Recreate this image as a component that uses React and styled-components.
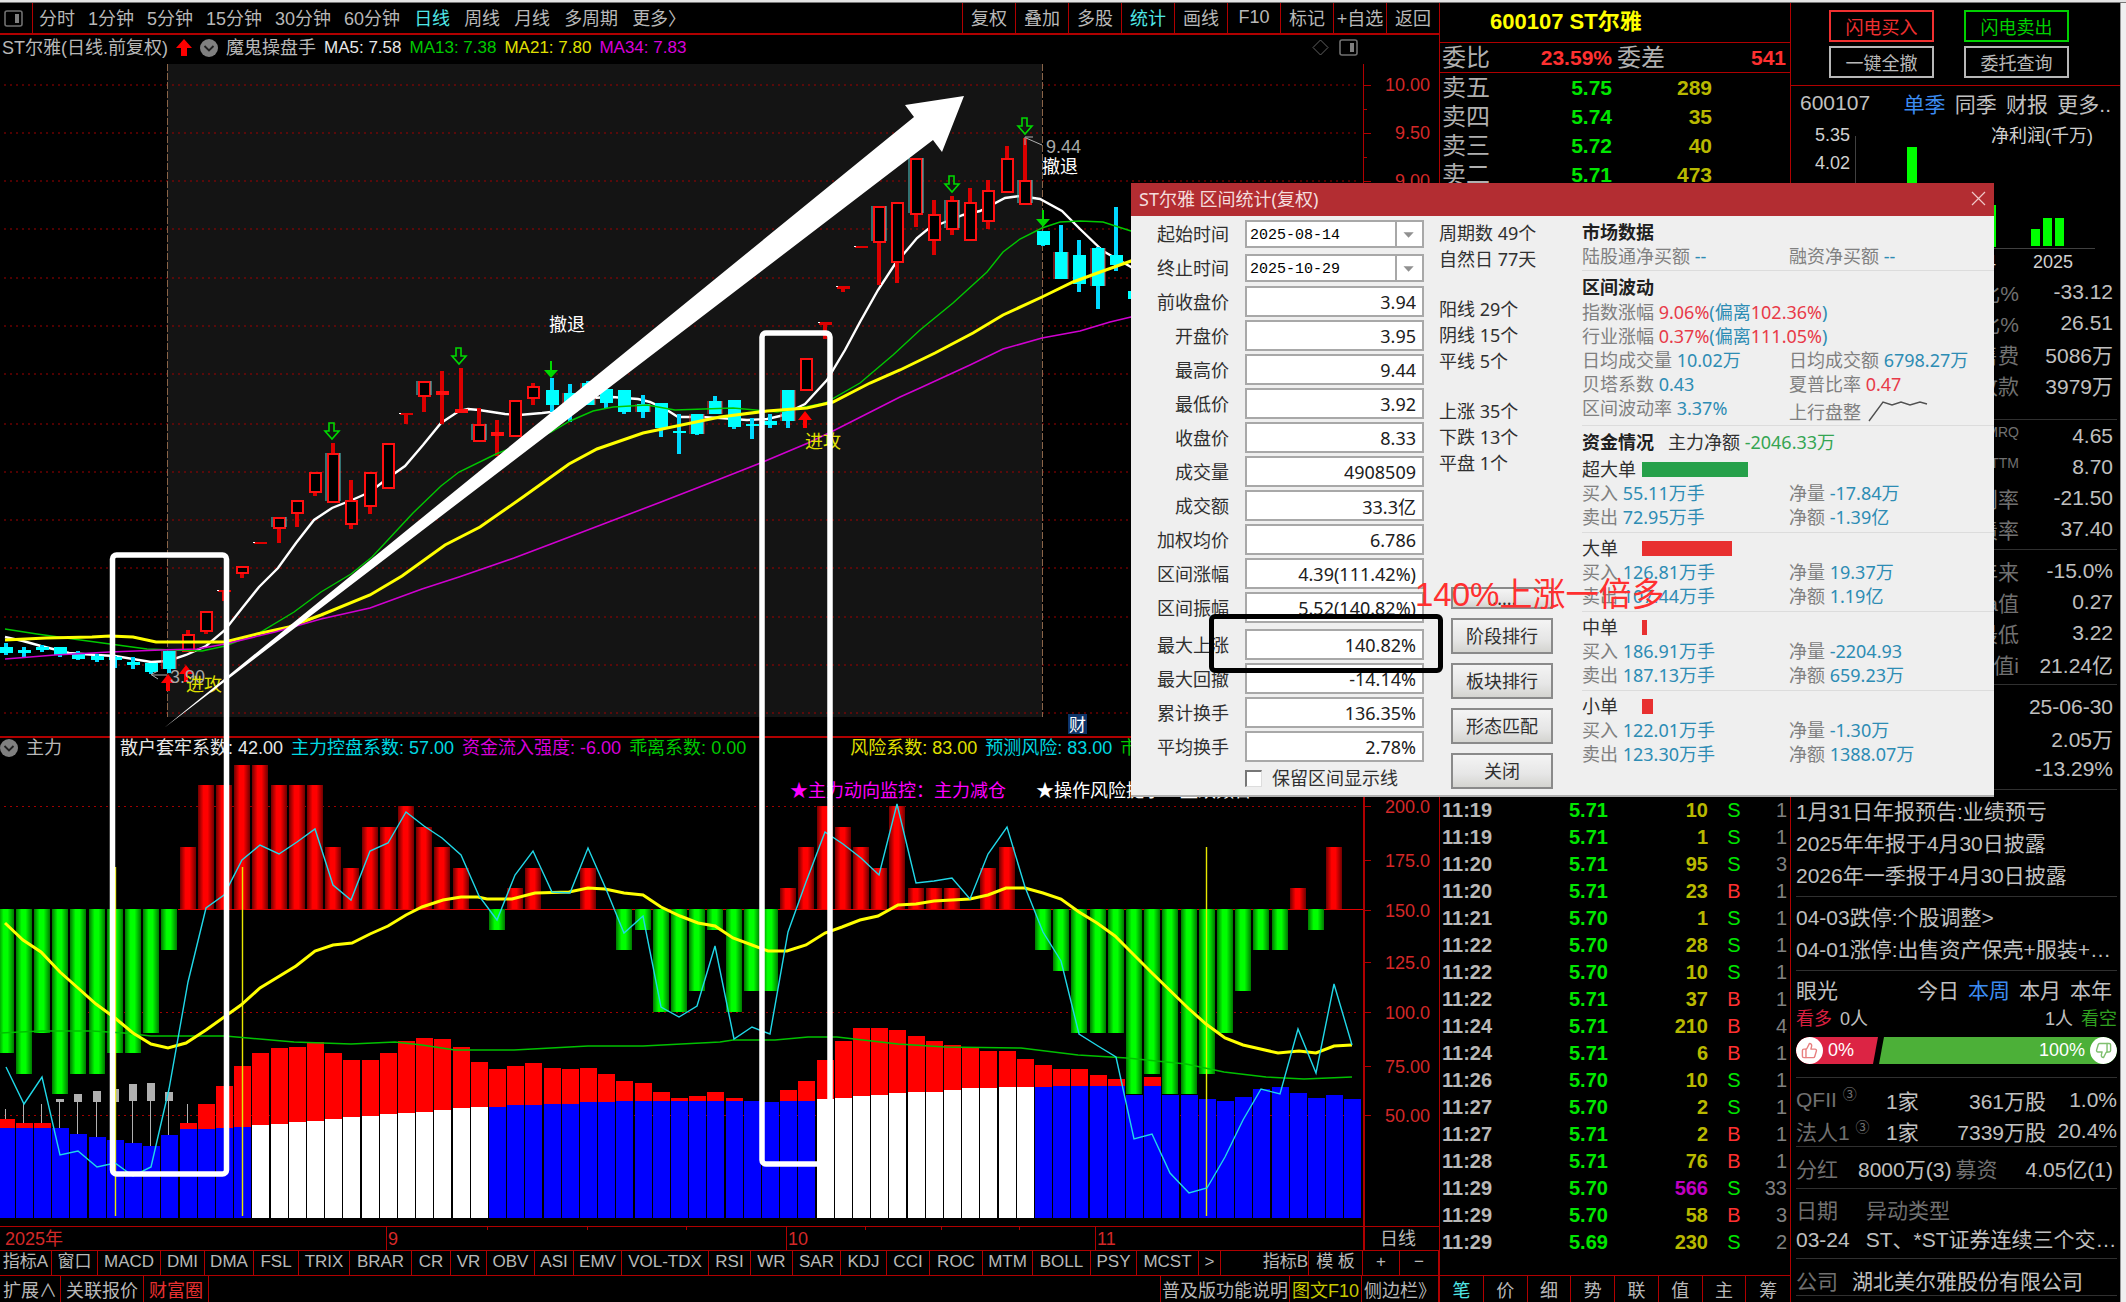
import React from "react";
import styled, { createGlobalStyle } from "styled-components";
import { ThumbsUp, ThumbsDown } from "lucide-react";

const RED = "#b00000";
const SANS = '"Liberation Sans", "Noto Sans CJK SC", sans-serif';
const UI = '"Noto Sans", "Noto Sans CJK SC", sans-serif';

const Global = createGlobalStyle`
  * { box-sizing: border-box; }
  body { margin: 0; background: #000; font-family: ${SANS}; color: #c0c0c0; font-size: 18px; }
  button { font-family: inherit; font-size: inherit; color: inherit; background: none; border: 0; padding: 0; margin: 0; cursor: pointer; white-space: nowrap; }
  a { text-decoration: none; color: inherit; }
  svg { display: block; }
`;

/* ---------- page ---------- */
const Page = styled.div`
  position: relative;
  min-height: 100vh;
  display: flex;
  flex-direction: column;
  border-top: 2px solid #e4e4e4;
`;
const Columns = styled.div`
  flex: 1;
  display: flex;
  border-top: 1px solid #777;
`;
const Left = styled.main`
  position: relative;
  flex: 1;
  min-width: 0;
  display: flex;
  flex-direction: column;
`;
const Orders = styled.section`
  width: 352px;
  display: flex;
  flex-direction: column;
  border-left: 1px solid ${RED};
  border-right: 1px solid ${RED};
`;
const Info = styled.aside`
  width: 329px;
  display: flex;
  flex-direction: column;
`;
const Edge = styled.div`
  width: 6px;
  background: #f0f0f0;
  border-left: 1px solid #999;
`;

/* ---------- toolbars ---------- */
const Toolbar = styled.nav`
  height: 32px;
  display: flex;
  align-items: center;
  border-bottom: 2px solid ${RED};
`;
const PanelToggle = styled.button`
  width: 33px;
  height: 30px;
  padding-left: 4px;
  margin-right: 6px;
  border-right: 1px solid ${RED};
`;
const TabGroup = styled.div`
  display: flex;
  gap: ${(p) => p.$gap}px;
  margin-right: 14px;
  padding-bottom: 2px;
`;
const Tab = styled.button`
  color: ${(p) => (p.$on ? "#4fe6e6" : "#b8b8b8")};
`;
const ToolCells = styled.div`
  margin-left: auto;
  display: flex;
  height: 30px;
`;
const ToolCell = styled(Tab)`
  width: 53px;
  padding-bottom: 2px;
  border-left: 1px solid ${RED};
`;
const Legend = styled.div`
  height: ${(p) => p.$h}px;
  display: flex;
  align-items: center;
  gap: 8px;
  white-space: nowrap;
  padding: 0 8px 4px ${(p) => p.$pad}px;
  border-top: ${(p) => (p.$line ? `2px solid ${RED}` : "0")};
  overflow: hidden;
`;
const LegendItem = styled.span`
  color: ${(p) => p.$c || "#b8b8b8"};
  font-size: ${(p) => p.$s || 18}px;
  margin-left: ${(p) => p.$ml || 0}px;
  line-height: 24px;
`;
const LegendTools = styled.div`
  margin-left: auto;
  margin-right: 73px;
  display: flex;
  gap: 10px;
`;
const IndicatorBar = styled.nav`
  height: 26px;
  display: grid;
  grid-template-columns:
    52px 46px 63px 44px 49px 45px 51px 62px 39px 36px 48px 39px 48px 87px 42px 42px 48px 46px 43px 53px 50px 58px 46px 62px 22px
    1fr 54px 37px 39px;
  border-top: 1px solid ${RED};
  border-bottom: 1px solid ${RED};
  font-size: 17px;
  color: #b8b8b8;
`;
const IndicatorCell = styled.button`
  border-right: 1px solid ${RED};
  padding-bottom: 2px;
  line-height: 22px;
  text-align: ${(p) => (p.$end ? "right" : "center")};
`;
const FootBar = styled.nav`
  height: 26px;
  display: flex;
`;
const FootCell = styled.button`
  padding: 0 ${(p) => p.$px || 5}px;
  color: ${(p) => p.$c || "#b8b8b8"};
  border-right: 1px solid ${RED};
`;
const FootRight = styled.div`
  margin-left: auto;
  display: flex;
  border-left: 1px solid ${RED};
`;

/* ---------- charts ---------- */
const ChartSvg = styled.svg`
  width: 100%;
  height: ${(p) => p.$h}px;
  font-family: ${SANS};
  font-size: 18px;
`;
const Marks = styled.svg`
  position: absolute;
  left: 0;
  top: 0;
  width: 100%;
  height: 100%;
  pointer-events: none;
`;

const X = (i) => Math.round(5.5 + 18.2 * i);

// index, body top, body bottom, high, low, kind (r hollow red, c filled cyan), edge tint
const candles = [
  [0, 647, 653, 643, 655, "c"], [1, 650, 653, 647, 658, "c"], [2, 647, 650, 645, 652, "c"],
  [3, 647, 655, 647, 657, "c"], [4, 653, 659, 651, 660, "c"], [5, 656, 660, 654, 662, "c"],
  [6, 657, 660, 656, 668, "c"], [7, 662, 665, 657, 669, "c"], [8, 663, 672, 663, 674, "c"],
  [9, 651, 669, 651, 673, "c", 1], [10, 634, 650, 630, 650, "r"], [11, 611, 630, 611, 634, "r"],
  [12, 590, 591, 590, 601, "t"], [13, 566, 572, 566, 578, "r"], [14, 542, 543, 542, 543, "t"],
  [15, 517, 527, 517, 543, "r", 1], [16, 500, 512, 500, 527, "r"], [17, 472, 491, 472, 496, "r"],
  [18, 453, 501, 443, 501, "r", 1], [19, 500, 523, 480, 529, "r"], [20, 472, 505, 472, 514, "r"],
  [21, 443, 487, 443, 487, "r"], [22, 413, 414, 413, 424, "t"], [23, 381, 395, 381, 412, "r", 1],
  [24, 391, 393, 371, 424, "r"], [25, 409, 411, 368, 412, "r"], [26, 424, 440, 408, 440, "r", 1],
  [27, 432, 434, 420, 456, "r"], [28, 400, 435, 400, 437, "r"], [29, 386, 397, 383, 405, "r"],
  [30, 390, 405, 378, 412, "c"], [31, 393, 412, 384, 422, "c", 1], [32, 383, 405, 381, 405, "c", 1],
  [33, 389, 403, 389, 408, "c"], [34, 390, 412, 390, 414, "c"], [35, 404, 412, 395, 418, "c", 1],
  [36, 403, 428, 403, 437, "c"], [37, 431, 433, 414, 454, "c"], [38, 414, 434, 414, 435, "c", 1],
  [39, 401, 414, 396, 414, "c", 1], [40, 400, 427, 400, 429, "c"], [41, 424, 426, 418, 439, "c"],
  [42, 421, 425, 414, 428, "c"], [43, 390, 421, 390, 428, "c", 1], [44, 358, 389, 358, 389, "r"],
  [45, 322, 324, 322, 339, "t"], [46, 286, 288, 286, 292, "t"], [47, 246, 247, 246, 247, "t"],
  [48, 206, 241, 206, 285, "r", 1], [49, 202, 261, 202, 283, "r"], [50, 158, 213, 158, 227, "r", 1],
  [51, 214, 239, 200, 255, "r"], [52, 200, 228, 196, 235, "r", 1], [53, 202, 239, 188, 239, "r"],
  [54, 190, 220, 180, 229, "r"], [55, 158, 191, 146, 191, "r"], [56, 180, 203, 138, 203, "r", 1],
  [57, 231, 245, 231, 246, "c"], [58, 252, 279, 225, 279, "c", 1], [59, 255, 284, 240, 292, "c"],
  [60, 248, 286, 247, 309, "c", 1], [61, 255, 265, 207, 271, "c"], [62, 291, 299, 291, 302, "c"],
];

const ma5 = "5,637 23,641 41,646 69,653 96,655 115,656 133,659 151,662 168,661 186,655 206,646 225,630 243,607 259,587 278,568 296,543 314,520 332,508 352,500 370,492 388,478 405,466 423,445 441,423 459,411 468,409 479,410 505,414 519,415 542,413 569,410 590,398 612,397 638,399 650,402 667,410 678,417 700,417 720,418 747,420 767,419 780,416 805,404 827,380 845,350 860,322 878,290 895,264 907,250 917,238 928,229 945,222 963,215 980,211 1005,198 1020,196 1040,199 1062,211 1080,229 1103,251 1131,267 1150,280";
const ma13 = "5,629 37,634 73,639 110,644 147,649 202,651 225,646 259,633 294,612 321,592 351,574 372,557 413,513 441,486 459,472 496,454 551,432 570,421 593,411 613,407 647,405 675,410 733,408 777,412 800,408 825,403 860,383 893,355 920,330 953,303 987,272 1003,252 1020,239 1042,228 1060,222 1080,221 1103,222 1131,231 1150,238";
const ma21 = "5,640 46,638 92,637 110,636 133,637 156,642 225,642 257,634 289,627 321,615 370,595 402,576 445,545 480,527 523,497 569,464 597,449 643,433 720,417 767,411 807,408 833,402 870,383 900,370 935,353 973,333 1003,315 1042,297 1073,282 1103,271 1131,261 1150,256";
const ma34 = "5,659 55,655 110,652 161,650 197,649 225,644 275,632 321,619 370,608 422,589 459,577 514,558 551,544 606,523 661,502 720,479 758,464 808,443 833,431 900,397 920,388 970,365 1003,349 1042,338 1080,331 1110,322 1131,317 1150,313";

function Candle({ d }) {
  const [i, top, bot, hi, lo, kind, edge] = d;
  const x = X(i);
  if (kind === "t") {
    return (
      <g fill="#dc0000">
        <rect x={x - 6} y={top} width={13} height={bot - top + 1} />
        <rect x={x - 2} y={top} width={4} height={lo - top} />
        <rect x={x - 7} y={top} width={2} height={1} fill="#fff" />
      </g>
    );
  }
  const isRed = kind === "r";
  const h = Math.max(2, bot - top);
  return (
    <g>
      <rect x={x - 2} y={hi} width={4} height={lo - hi} fill={isRed ? "#dc0000" : "#00d8ff"} />
      {isRed ? (
        <rect x={x - 5} y={top + 1} width={11} height={h} fill="#000" stroke="#ff1010" strokeWidth="2" />
      ) : (
        <rect x={x - 6} y={top} width={13} height={h} fill="#00ffff" />
      )}
      {edge ? (
        <path d={`M${x - 7} ${top}v${h}M${x + 7} ${top}v${h}`} stroke={isRed ? "#50d0d0" : "#e03030"} />
      ) : null}
    </g>
  );
}

const DownHollow = ({ x, y }) => (
  <path d={`M${x - 3} ${y}h5v8h5l-7 8l-7 -8h4z`} fill="none" stroke="#00d800" strokeWidth="1.6" />
);
const DownSolid = ({ x, y }) => <path d={`M${x - 1} ${y}h2v9h6l-7 8l-7 -8h6z`} fill="#00d800" />;
const UpSolid = ({ x, y }) => <path d={`M${x} ${y}l7 9h-5v8h-4v-8h-5z`} fill="#ff0000" />;

const priceGrid = [85, 133, 181, 229, 278, 326, 374, 424, 472, 520, 568, 617, 665, 713];

function PriceChart() {
  return (
    <ChartSvg $h={672} viewBox="0 64 1439 672" preserveAspectRatio="none">
      <rect x="167" y="64" width="875" height="653" fill="#141414" />
      {priceGrid.map((y) => (
        <line key={y} x1="4" x2="1357" y1={y} y2={y} stroke="#a00000" strokeDasharray="2 4" />
      ))}
      <path d="M167.5 64V717M1042.5 64V717" stroke="#8a6448" strokeDasharray="7 2" />
      <polyline points={ma5} fill="none" stroke="#fff" strokeWidth="2.4" />
      {candles.map((d) => <Candle key={d[0]} d={d} />)}
      <polyline points={ma13} fill="none" stroke="#00c800" strokeWidth="1.4" />
      <polyline points={ma21} fill="none" stroke="#ffff00" strokeWidth="3" />
      <polyline points={ma34} fill="none" stroke="#d000d0" strokeWidth="1.6" />
      <DownHollow x={459} y={348} />
      <DownHollow x={332} y={423} />
      <DownHollow x={952} y={176} />
      <DownHollow x={1025} y={118} />
      <DownSolid x={551} y={361} />
      <DownSolid x={1043} y={210} />
      <UpSolid x={168} y={674} />
      <UpSolid x={186} y={665} />
      <UpSolid x={805} y={411} />
      <path d="M167 675H152M158 679L151 674.5L158 671M1042 145L1026 138M1025 145V137L1033 137" fill="none" stroke="#b0b0b0" />
      <text x="170" y="683" fill="#a8a8a8">3.90</text>
      <text x="1046" y="153" fill="#a8a8a8">9.44</text>
      <text x="186" y="691" fill="#e0e000">进攻</text>
      <text x="805" y="448" fill="#e0e000">进攻</text>
      <text x="549" y="331" fill="#fff">撤退</text>
      <text x="1042" y="173" fill="#fff">撤退</text>
      <rect x="1068" y="714" width="19" height="20" fill="#0c3468" />
      <text x="1069" y="731" fill="#fff" fontSize="17">财</text>
      <line x1="1363.5" x2="1363.5" y1="64" y2="736" stroke={RED} />
      {priceGrid.map((y) => (
        <path key={y} d={`M1364 ${y}.5h7M1364 ${y + 24}.5h3`} stroke={RED} />
      ))}
      <g fill="#d42828" textAnchor="end">
        <text x="1430" y="91">10.00</text>
        <text x="1430" y="139">9.50</text>
        <text x="1430" y="187">9.00</text>
      </g>
    </ChartSvg>
  );
}

const force = [
  80, 70, 90, 60, 70, 70, 80, 80, 90, 130, 180, 210, 210, 220, 220, 210, 210, 210, 180, 170, 190, 190, 200, 190, 180,
  170, 150, 140, 160, 170, 150, 150, 170, 150, 130, 140, 100, 100, 110, 140, 100, 110, 110, 160, 180, 200, 190, 180,
  170, 200, 160, 160, 160, 150, 170, 180, 150, 130, 120, 90, 90, 90, 60, 70, 60, 60, 70, 90, 110, 130, 130, 160, 140,
  180, 150,
];
const redTop = [
  1119, 1123, 1123, 0, 0, 0, 0, 0, 0, 0, 1123, 1104, 1086, 1066, 1053, 1048, 1047, 1042, 1053, 1060, 1060, 1053, 1041,
  1038, 1039, 1047, 1062, 1069, 1066, 1063, 1068, 1069, 1068, 1074, 1081, 1083, 1092, 1098, 1096, 1092, 1098, 0, 0,
  1090, 1081, 1060, 1041, 1028, 1028, 1030, 1036, 1041, 1045, 1048, 1051, 1051, 1059, 1065, 1069, 1069, 1075, 1079, 0,
  1077, 0, 0, 0, 0, 0, 0, 0, 0, 0, 0, 0,
];
const baseTop = [
  1128, 1128, 1128, 1128, 1134, 1137, 1140, 1143, 1146, 1135, 1129, 1129, 1128, 1127, 1125, 1124, 1122, 1121, 1119,
  1117, 1116, 1114, 1113, 1112, 1110, 1108, 1107, 1107, 1105, 1105, 1104, 1104, 1102, 1102, 1101, 1101, 1101, 1101,
  1101, 1101, 1101, 1101, 1102, 1101, 1101, 1099, 1098, 1096, 1095, 1093, 1092, 1092, 1090, 1088, 1088, 1087, 1087,
  1087, 1086, 1086, 1086, 1086, 1095, 1086, 1095, 1095, 1099, 1101, 1097, 1089, 1087, 1093, 1098, 1095, 1099,
];
const trend = [
  1067, 1104, 1077, 1155, 1151, 1167, 1163, 1176, 1167, 1089, 982, 908, 895, 860, 845, 854, 842, 829, 885, 900, 851,
  843, 812, 826, 838, 855, 896, 920, 875, 851, 892, 893, 848, 889, 933, 916, 1007, 1017, 1006, 946, 1039, 1027, 1034,
  932, 882, 832, 844, 858, 875, 804, 883, 881, 878, 899, 854, 827, 887, 932, 961, 1034, 1046, 1057, 1139, 1134, 1173,
  1193, 1188, 1157, 1120, 1089, 1094, 1029, 1073, 984, 1045,
];
const sticks = [
  [0, 0, 1109, 1119], [1, 0, 1104, 1123], [2, 0, 1104, 1123], [3, 1099, 1102, 1128], [4, 1094, 1102, 1134],
  [5, 1091, 1102, 1137], [6, 1089, 1102, 1140], [7, 1084, 1101, 1143], [8, 1083, 1101, 1146], [9, 1092, 1101, 1135],
  [10, 0, 1104, 1123],
];
const slowLine = "5,923 23,940 41,952 60,972 78,988 96,1004 115,1018 133,1033 151,1044 168,1048 186,1043 206,1030 241,1005 260,988 296,966 315,951 333,945 352,943 370,934 388,926 406,915 422,907 443,900 461,897 478,897 487,899 512,899 535,893 569,892 588,888 605,889 624,893 643,895 661,907 680,916 698,923 715,926 733,938 752,945 768,951 787,951 806,945 825,933 842,927 860,920 878,916 898,905 916,904 934,901 970,899 988,895 1006,888 1025,888 1043,893 1061,899 1079,912 1097,923 1115,936 1133,954 1152,973 1188,1008 1206,1024 1225,1038 1243,1045 1278,1053 1299,1051 1316,1053 1334,1046 1352,1045";
const marketLine = "0,1033 41,1031 92,1031 124,1033 151,1036 225,1036 248,1038 294,1042 351,1044 395,1042 422,1045 455,1050 514,1050 588,1046 643,1046 720,1042 733,1040 775,1040 808,1037 837,1037 898,1044 945,1047 1021,1048 1078,1055 1127,1058 1186,1064 1224,1072 1266,1077 1304,1079 1352,1077";
const forceAxis = [[806, "200.0"], [860, "175.0"], [910, "150.0"], [962, "125.0"], [1012, "100.0"], [1066, "75.00"], [1115, "50.00"]];
const isWhite = (i) => (i >= 14 && i <= 26) || (i >= 45 && i <= 56);

function ForceChart() {
  return (
    <ChartSvg $h={488} viewBox="0 762 1439 488" preserveAspectRatio="none">
      <defs>
        <linearGradient id="barRed">
          <stop offset="0" stopColor="#700000" />
          <stop offset=".35" stopColor="#ff0000" />
          <stop offset=".6" stopColor="#ff0000" />
          <stop offset="1" stopColor="#700000" />
        </linearGradient>
        <linearGradient id="barGreen">
          <stop offset="0" stopColor="#007800" />
          <stop offset=".35" stopColor="#00ff00" />
          <stop offset=".6" stopColor="#00ff00" />
          <stop offset="1" stopColor="#007800" />
        </linearGradient>
      </defs>
      {[806, 1012, 1115].map((y) => (
        <line key={y} x1="4" x2="1357" y1={y + 0.5} y2={y + 0.5} stroke="#a00000" strokeDasharray="2 4" />
      ))}
      <line x1="178" x2="1363" y1="909.5" y2="909.5" stroke="#e00000" />
      {redTop.map((y, i) => (y ? <rect key={i} x={X(i) - 8} y={y} width="17" height={1218 - y} fill="#ff0000" /> : null))}
      {force.map((v, i) => {
        const y = Math.round(909 - (v - 150) * 2.06);
        if (v > 150) return <rect key={i} x={X(i) - 8} y={y} width="16" height={909 - y} fill="url(#barRed)" />;
        if (v < 150) return <rect key={i} x={X(i) - 8} y="909" width="16" height={y - 909} fill="url(#barGreen)" />;
        return null;
      })}
      {baseTop.map((y, i) => (
        <rect key={i} x={X(i) - 8} y={y} width="17" height={1218 - y} fill={isWhite(i) ? "#fff" : "#0000ff"} />
      ))}
      {sticks.map(([i, head, top, bot]) => (
        <g key={i} fill="#b0b0b0">
          {head ? <rect x={X(i) - 4} y={head} width="8" height={top - head} /> : null}
          <rect x={X(i) - 1} y={top} width="1" height={bot - top} />
        </g>
      ))}
      <path d="M115.5 867V1216M242.5 867V1216M1206.5 847V1216" stroke="#e8e800" strokeWidth="1.4" />
      <polyline points={marketLine} fill="none" stroke="#00c000" strokeWidth="1.6" />
      <polyline points={slowLine} fill="none" stroke="#ffff00" strokeWidth="3" />
      <polyline points={trend.map((y, i) => `${X(i)},${y}`).join(" ")} fill="none" stroke="#20d8e8" strokeWidth="1.4" />
      <text x="790" y="797" fill="#ff00ff">★主力动向监控：主力减仓</text>
      <text x="1036" y="797" fill="#fff">★操作风险提示：盘跌频合</text>
      <line x1="1364" x2="1364" y1="762" y2="1250" stroke={RED} strokeWidth="2" />
      {forceAxis.map(([y, t]) => (
        <g key={t}>
          <path d={`M1364 ${y}.5h7`} stroke={RED} />
          <text x="1430" y={y + 7} fill="#d42828" textAnchor="end">{t}</text>
        </g>
      ))}
      <path d="M0 1226.5H1439M386.5 1226V1250M786.5 1226V1250M1095.5 1226V1250" stroke={RED} />
      <path d="M487.5 1226v4M587.5 1226v4M686.5 1226v4M865.5 1226v4M941.5 1226v4M1019.5 1226v4" stroke={RED} />
      <g fill="#d42828">
        <text x="5" y="1245">2025年</text>
        <text x="388" y="1245">9</text>
        <text x="788" y="1245">10</text>
        <text x="1097" y="1245">11</text>
      </g>
      <text x="1380" y="1245" fill="#b8b8b8">日线</text>
    </ChartSvg>
  );
}

/* ---------- order book ---------- */
const StockTitle = styled.h1`
  margin: 0;
  height: 40px;
  padding-left: 50px;
  line-height: 38px;
  font-size: 22px;
  color: #ffff00;
  border-bottom: 1px solid ${RED};
`;
const BookRow = styled.div`
  display: grid;
  grid-template-columns: 60px 110px 56px 44px 1fr;
  align-items: center;
  height: ${(p) => (p.$head ? 30 : 29)}px;
  padding: 0 4px 0 2px;
  font-size: 24px;
  line-height: 28px;
  white-space: nowrap;
  color: #b0b0b0;
  border-bottom: ${(p) => (p.$head ? `1px solid ${RED}` : "0")};
`;
const DiffLabel = styled.span`
  padding-left: 5px;
`;
const Num = styled.b`
  font-size: 21px;
  text-align: right;
  color: ${(p) => p.$c};
  grid-column: ${(p) => p.$col || "auto"};
`;
const Hidden = styled.div`
  flex: 1;
`;
const TickTable = styled.table`
  width: 100%;
  table-layout: fixed;
  border-collapse: collapse;
  font-size: 20px;
  margin-bottom: 20px;
  td { height: 27px; padding: 0; font-weight: bold; text-align: right; line-height: 26px; }
  td:first-child { text-align: left; padding-left: 2px; color: #b8b8b8; }
  td:nth-child(2) { text-align: left; color: #00e600; }
  td:nth-child(4) { text-align: center; font-weight: normal; }
  td:last-child { padding-right: 3px; color: #808080; font-weight: normal; }
`;
const Side = styled.td`
  color: ${(p) => (p.$s === "S" ? "#00e600" : "#ff3030")};
`;
const Vol = styled.td`
  color: ${(p) => (p.$big ? "#c000c0" : "#b8b800")};
`;
const BookTabs = styled.nav`
  height: 27px;
  display: grid;
  grid-template-columns: repeat(8, 1fr);
  border-top: 1px solid ${RED};
`;
const BookTab = styled(Tab)`
  border-right: 1px solid ${RED};
  &:last-child { border-right: 0; }
`;
const asks = [["卖五", "5.75", "289"], ["卖四", "5.74", "35"], ["卖三", "5.72", "40"], ["卖二", "5.71", "473"]];
const ticks = [
  ["11:19", "5.71", 10, "S", 1], ["11:19", "5.71", 1, "S", 1], ["11:20", "5.71", 95, "S", 3], ["11:20", "5.71", 23, "B", 1],
  ["11:21", "5.70", 1, "S", 1], ["11:22", "5.70", 28, "S", 1], ["11:22", "5.70", 10, "S", 1], ["11:22", "5.71", 37, "B", 1],
  ["11:24", "5.71", 210, "B", 4], ["11:24", "5.71", 6, "B", 1], ["11:26", "5.70", 10, "S", 1], ["11:27", "5.70", 2, "S", 1],
  ["11:27", "5.71", 2, "B", 1], ["11:28", "5.71", 76, "B", 1], ["11:29", "5.70", 566, "S", 33], ["11:29", "5.70", 58, "B", 3],
  ["11:29", "5.69", 230, "S", 2],
];

/* ---------- company info ---------- */
const TradeGrid = styled.div`
  display: grid;
  grid-template-columns: 105px 105px;
  grid-auto-rows: 32px;
  column-gap: 30px;
  row-gap: 4px;
  padding: 7px 0 7px 38px;
  border-bottom: 1px solid ${RED};
`;
const TradeButton = styled.button`
  color: ${(p) => p.$c};
  border: 2px solid ${(p) => p.$c};
`;
const InfoTabs = styled.div`
  display: flex;
  align-items: center;
  justify-content: space-between;
  height: 36px;
  padding: 0 9px 2px 9px;
  font-size: 21px;
  line-height: 30px;
  span { margin-right: 24px; }
`;
const InfoTab = styled.button`
  color: ${(p) => (p.$on ? "#3c8cf0" : "#c0c0c0")};
`;
const ProfitSvg = styled.svg`
  width: 100%;
  height: 154px;
  font-family: ${SANS};
  font-size: 18px;
`;
const Section = styled.div`
  margin: 0 3px 0 5px;
  padding: ${(p) => p.$pad || "0"};
  border-bottom: 1px solid #303030;
  font-size: 21px;
`;
const Metric = styled.div`
  display: grid;
  grid-template-columns: 223px 1fr;
  align-items: center;
  height: 31px;
  padding-right: 4px;
  text-align: right;
  color: #c0c0c0;
  white-space: nowrap;
`;
const Dim = styled.span`
  color: #707070;
  sup { font-size: 14px; line-height: 10px; }
`;
const NewsLink = styled.a`
  display: block;
  height: 32px;
  line-height: 31px;
  color: #c0c0c0;
  white-space: nowrap;
`;
const VoteRow = styled.div`
  display: flex;
  gap: 8px;
  height: 26px;
  align-items: center;
  font-size: 18px;
  b { font-weight: normal; color: #d82040; }
  b:last-child { color: #30a020; }
  span:nth-child(2) { margin-right: auto; }
`;
const Gauge = styled.div`
  display: flex;
  height: 27px;
  margin-top: 7px;
  border-radius: 14px;
  overflow: hidden;
  font-size: 18px;
  color: #fff;
`;
const GaugePart = styled.div`
  display: flex;
  align-items: center;
  gap: 5px;
  flex: ${(p) => (p.$grow ? 1 : "0 0 82px")};
  justify-content: ${(p) => (p.$grow ? "flex-end" : "flex-start")};
  margin-left: ${(p) => (p.$grow ? 1 : 0)}px;
  background: ${(p) => p.$c};
  clip-path: ${(p) =>
    p.$grow ? "polygon(5px 0, 100% 0, 100% 100%, 0 100%)" : "polygon(0 0, 100% 0, calc(100% - 5px) 100%, 0 100%)"};
`;
const Thumb = styled.span`
  width: 27px;
  height: 27px;
  border-radius: 50%;
  background: #fff;
  color: ${(p) => p.$c};
  display: grid;
  place-items: center;
`;
const Holders = styled.div`
  display: grid;
  grid-template-columns: 90px 32px 128px 1fr;
  height: 31px;
  align-items: center;
  text-align: right;
  white-space: nowrap;
  > :first-child { text-align: left; }
`;
const Line = styled.div`
  display: flex;
  align-items: center;
  height: 31px;
  gap: ${(p) => p.$gap || 14}px;
  padding-right: ${(p) => p.$pr || 0}px;
  white-space: nowrap;
`;
const Push = styled(Dim)`
  margin-right: auto;
`;
const Lead = styled.span`
  color: ${(p) => (p.$dim ? "#707070" : "#c0c0c0")};
  margin-right: ${(p) => (p.$dim ? "16px" : "auto")};
`;

/* ---------- dialog ---------- */
const Dialog = styled.section`
  position: absolute;
  left: 1131px;
  top: 181px;
  width: 863px;
  height: 614px;
  background: #efefef;
  border-bottom: 2px solid #b0b0b0;
  color: #303030;
  font-family: ${UI};
  font-size: 18px;
  line-height: 24px;
`;
const DialogBar = styled.header`
  display: flex;
  align-items: center;
  justify-content: space-between;
  height: 33px;
  padding: 0 8px 2px;
  background: #b32d32;
  color: #f4dcdc;
`;
const DialogBody = styled.div`
  display: grid;
  grid-template-columns: 293px 128px 1fr;
  column-gap: 15px;
`;
const Form = styled.form`
  padding: 2px 0 0 10px;
`;
const FormGroup = styled.div`
  display: grid;
  row-gap: 3px;
  margin-bottom: 6px;
`;
const Field = styled.div`
  display: grid;
  grid-template-columns: 88px 179px;
  column-gap: 16px;
  align-items: center;
  height: 31px;
  label { text-align: right; }
`;
const Input = styled.input`
  height: 31px;
  min-width: 0;
  border: 2px solid #a8a8a8;
  background: #fff;
  color: #202020;
  font: 18px ${UI};
  text-align: right;
  padding: 0 6px;
`;
const SelectBox = styled.div`
  display: grid;
  grid-template-columns: 1fr 27px;
  height: 28px;
  border: 2px solid #a8a8a8;
  background: #fff;
  svg { border-left: 2px solid #a8a8a8; width: 27px; height: 24px; }
`;
const Select = styled.select`
  appearance: none;
  border: 0;
  background: #fff;
  color: #000;
  height: 24px;
  font: 15px "Liberation Mono", monospace;
  padding: 3px 3px 0;
`;
const Keep = styled.label`
  display: flex;
  align-items: center;
  gap: 10px;
  padding-left: 104px;
  margin-top: -2px;
  input { appearance: none; width: 17px; height: 17px; margin: 0; background: #fff; border: 1px solid #ddd; border-top: 2px solid #777; border-left: 2px solid #777; }
`;
const Counts = styled.div`
  display: flex;
  flex-direction: column;
  padding-top: 4px;
  height: 581px;
  p { margin: 0 0 24px; line-height: 26px; white-space: pre-line; }
`;
const Actions = styled.div`
  margin: auto 14px 8px 12px;
  display: grid;
  row-gap: 9px;
  grid-template-rows: 22px;
  grid-auto-rows: 36px;
`;
const Action = styled.button`
  border: 2px solid #8a8a8a;
  background: linear-gradient(#f4f4f4, #e6e6e6 60%, #d4d4d0);
  overflow: hidden;
  color: #303030;
  line-height: 18px;
`;
const Stats = styled.div`
  min-width: 0;
  color: #808080;
`;
const StatBlock = styled.div`
  padding: ${(p) => p.$pad || "3px 0"};
  border-top: ${(p) => (p.$first ? "0" : "1px solid #dcdcdc")};
`;
const Heading = styled.h2`
  margin: 0 0 ${(p) => p.$mb || 0}px;
  font-size: 18px;
  line-height: 24px;
  color: #202020;
  span { font-weight: normal; margin-left: 14px; color: #303030; }
`;
const Pair = styled.div`
  display: grid;
  grid-template-columns: 207px 1fr;
  height: 24px;
  white-space: nowrap;
`;
const Val = styled.span`
  color: ${(p) => (p.$c === "r" ? "#e83a48" : p.$c === "g" ? "#35a552" : "#2d8cb4")} !important;
  margin: 0 !important;
`;
const FlowTitle = styled.div`
  display: grid;
  grid-template-columns: 60px 1fr;
  align-items: center;
  height: 24px;
  color: #303030;
`;
const FlowBar = styled.div`
  height: 15px;
  background: ${(p) => p.$c};
`;
const BlackFrame = styled.div`
  position: absolute;
  left: 78px;
  top: 431px;
  width: 234px;
  height: 59px;
  border: 5px solid #000;
  border-radius: 6px;
  pointer-events: none;
`;
const RedNote = styled.div`
  position: absolute;
  left: 284px;
  top: 391px;
  font: 33px/42px ${SANS};
  color: #ff3030;
  white-space: nowrap;
  pointer-events: none;
`;

const fields = [
  ["前收盘价", "3.94"], ["开盘价", "3.95"], ["最高价", "9.44"], ["最低价", "3.92"], ["收盘价", "8.33"], ["成交量", "4908509"],
  ["成交额", "33.3亿"], ["加权均价", "6.786"], ["区间涨幅", "4.39(111.42%)"], ["区间振幅", "5.52(140.82%)"],
];
const lateFields = [["最大上涨", "140.82%"], ["最大回撤", "-14.14%"], ["累计换手", "136.35%"], ["平均换手", "2.78%"]];
const flows = [
  ["超大单", 106, "#26a04a", "55.11万手", "-17.84万", "72.95万手", "-1.39亿"],
  ["大单", 90, "#e83030", "126.81万手", "19.37万", "107.44万手", "1.19亿"],
  ["中单", 5, "#e83030", "186.91万手", "-2204.93", "187.13万手", "659.23万"],
  ["小单", 11, "#e83030", "122.01万手", "-1.30万", "123.30万手", "1388.07万"],
];

const DateField = ({ id, label, value }) => (
  <Field>
    <label htmlFor={id}>{label}</label>
    <SelectBox>
      <Select id={id} defaultValue={value}><option>{value}</option></Select>
      <svg viewBox="0 0 27 24"><path d="M7 10h11l-5.500 6z" fill="#909090" /></svg>
    </SelectBox>
  </Field>
);
const TextField = ({ label, value }) => (
  <Field>
    <label htmlFor={label}>{label}</label>
    <Input id={label} readOnly defaultValue={value} />
  </Field>
);
const Flow = ({ f }) => (
  <>
    <FlowTitle>{f[0]}<FlowBar $c={f[2]} style={{ width: f[1] }} /></FlowTitle>
    <Pair><span>买入 <Val>{f[3]}</Val></span><span>净量 <Val>{f[4]}</Val></span></Pair>
    <Pair><span>卖出 <Val>{f[5]}</Val></span><span>净额 <Val>{f[6]}</Val></span></Pair>
  </>
);

function StatsDialog() {
  return (
    <Dialog role="dialog" aria-label="区间统计">
      <DialogBar>
        <span>ST尔雅 区间统计(复权)</span>
        <button aria-label="关闭窗口">
          <svg width="15" height="15" viewBox="0 0 15 15"><path d="M1 1L14 14M14 1L1 14" stroke="#f0c8c8" strokeWidth="1.2" /></svg>
        </button>
      </DialogBar>
      <DialogBody>
        <Form>
          <FormGroup>
            <DateField id="from" label="起始时间" value="2025-08-14" />
            <DateField id="to" label="终止时间" value="2025-10-29" />
            {fields.map(([l, v]) => <TextField key={l} label={l} value={v} />)}
          </FormGroup>
          <FormGroup>
            {lateFields.map(([l, v]) => <TextField key={l} label={l} value={v} />)}
          </FormGroup>
          <Keep><input type="checkbox" />保留区间显示线</Keep>
        </Form>
        <Counts>
          <p>{"周期数 49个\n自然日 77天"}</p>
          <p>{"阳线 29个\n阴线 15个\n平线 5个"}</p>
          <p>{"上涨 35个\n下跌 13个\n平盘 1个"}</p>
          <Actions>
            {["......", "阶段排行", "板块排行", "形态匹配", "关闭"].map((t) => <Action key={t}>{t}</Action>)}
          </Actions>
        </Counts>
        <Stats>
          <StatBlock $first $pad="4px 0 2px">
            <Heading>市场数据</Heading>
            <Pair><span>陆股通净买额 <Val>--</Val></span><span>融资净买额 <Val>--</Val></span></Pair>
          </StatBlock>
          <StatBlock $pad="4px 0 5px">
            <Heading $mb={1}>区间波动</Heading>
            <Pair><span>指数涨幅 <Val $c="r">9.06%</Val><Val>(偏离<Val $c="r">102.36%</Val>)</Val></span></Pair>
            <Pair><span>行业涨幅 <Val $c="r">0.37%</Val><Val>(偏离<Val $c="r">111.05%</Val>)</Val></span></Pair>
            <Pair><span>日均成交量 <Val>10.02万</Val></span><span>日均成交额 <Val>6798.27万</Val></span></Pair>
            <Pair><span>贝塔系数 <Val>0.43</Val></span><span>夏普比率 <Val $c="r">0.47</Val></span></Pair>
            <Pair>
              <span>区间波动率 <Val>3.37%</Val></span>
              <Line $gap={7}>
                上行盘整
                <svg width="60" height="24" viewBox="0 0 60 24"><path d="M1 21L15 2L24 5L33 2L42 5L52 2L59 4" fill="none" stroke="#505050" strokeWidth="1.4" /></svg>
              </Line>
            </Pair>
          </StatBlock>
          <StatBlock $pad="4px 0 3px">
            <Heading $mb={3}>资金情况<span>主力净额 <Val $c="g">-2046.33万</Val></span></Heading>
            <Flow f={flows[0]} />
          </StatBlock>
          {flows.slice(1).map((f) => <StatBlock key={f[0]}><Flow f={f} /></StatBlock>)}
        </Stats>
      </DialogBody>
      <RedNote>140%上涨一倍多</RedNote>
      <BlackFrame />
    </Dialog>
  );
}

const PanelIcon = () => (
  <svg width="19" height="17" viewBox="0 0 19 17">
    <rect x="1" y="1" width="17" height="15" rx="2" fill="none" stroke="#707070" strokeWidth="1.6" />
    <rect x="11" y="4" width="4" height="9" fill="#808080" />
  </svg>
);
const RoundChevron = () => (
  <svg width="18" height="18" viewBox="0 0 18 18">
    <circle cx="9" cy="9" r="9" fill="#808080" />
    <path d="M4.500 7l4.500 4.500L13.500 7" fill="none" stroke="#202020" strokeWidth="1.8" />
  </svg>
);

const indicators = ["指标A", "窗口", "MACD", "DMI", "DMA", "FSL", "TRIX", "BRAR", "CR", "VR", "OBV", "ASI", "EMV", "VOL-TDX", "RSI", "WR", "SAR", "KDJ", "CCI", "ROC", "MTM", "BOLL", "PSY", "MCST", ">", "指标B", "模 板", "+", "−"];
const metrics = [
  [["收入比%", "-33.12"], ["利润比%", "26.51"], ["销售费", "5086万"], ["应收款", "3979万"]],
  [["市净", "4.65", "MRQ"], ["市盈", "8.70", "TTM"], ["毛利率", "-21.50"], ["负债率", "37.40"]],
  [["今年来", "-15.0%"], ["Beta值", "0.27"], ["最低", "3.22"], ["总值i", "21.24亿"]],
  [["", "25-06-30"], ["", "2.05万"], ["", "-13.29%"]],
];
const metricPad = ["0 0 19px", "0 0 5px", "5px 0 5px", "6px 0 5px"];

export default function App() {
  return (
    <Page>
      <Global />
      <Columns>
        <Left>
          <Toolbar>
            <PanelToggle aria-label="侧栏"><PanelIcon /></PanelToggle>
            <TabGroup $gap={13}>
              {["分时", "1分钟", "5分钟", "15分钟", "30分钟", "60分钟"].map((t) => <Tab key={t}>{t}</Tab>)}
            </TabGroup>
            <TabGroup $gap={14}>
              {["日线", "周线", "月线", "多周期", "更多〉"].map((t) => <Tab key={t} $on={t === "日线"}>{t}</Tab>)}
            </TabGroup>
            <ToolCells>
              {["复权", "叠加", "多股", "统计", "画线", "F10", "标记", "+自选", "返回"].map((t) => (
                <ToolCell key={t} $on={t === "统计"}>{t}</ToolCell>
              ))}
            </ToolCells>
          </Toolbar>
          <Legend $h={29} $pad={2}>
            <LegendItem>ST尔雅(日线.前复权)</LegendItem>
            <svg width="16" height="18" viewBox="0 0 16 18"><path d="M8 0l8 9h-5v8H5V9H0z" fill="#f00" /></svg>
            <RoundChevron />
            <LegendItem>魔鬼操盘手</LegendItem>
            <LegendItem $c="#e8e8e8" $s={17}>MA5: 7.58</LegendItem>
            <LegendItem $c="#00c800" $s={17}>MA13: 7.38</LegendItem>
            <LegendItem $c="#e0e000" $s={17}>MA21: 7.80</LegendItem>
            <LegendItem $c="#d800d8" $s={17}>MA34: 7.83</LegendItem>
            <LegendTools>
              <svg width="17" height="17" viewBox="0 0 17 17"><path d="M8.500 1L16 8.500L8.500 16L1 8.500z" fill="none" stroke="#606060" /></svg>
              <PanelIcon />
            </LegendTools>
          </Legend>
          <PriceChart />
          <Legend $h={26} $pad={0} $line>
            <RoundChevron />
            <LegendItem>主力</LegendItem>
            <LegendItem $c="#e8e8e8" $ml={50}>散户套牢系数: 42.00</LegendItem>
            <LegendItem $c="#00d8e0">主力控盘系数: 57.00</LegendItem>
            <LegendItem $c="#d800d8">资金流入强度: -6.00</LegendItem>
            <LegendItem $c="#00c800">乖离系数: 0.00</LegendItem>
            <LegendItem $c="#e0e000" $ml={96}>风险系数: 83.00</LegendItem>
            <LegendItem $c="#00d8e0">预测风险: 83.00</LegendItem>
            <LegendItem $c="#00c800">市</LegendItem>
          </Legend>
          <ForceChart />
          <IndicatorBar>
            {indicators.map((t) => <IndicatorCell key={t} $end={t === "指标B"}>{t}</IndicatorCell>)}
          </IndicatorBar>
          <FootBar>
            <FootCell $px={3}>扩展∧</FootCell>
            <FootCell>关联报价</FootCell>
            <FootCell $c="#e83030">财富圈</FootCell>
            <FootRight>
              <FootCell $px={1}>普及版功能说明</FootCell>
              <FootCell $px={2} $c="#c8c800">图文F10</FootCell>
              <FootCell $px={2}>侧边栏》</FootCell>
            </FootRight>
          </FootBar>
          <Marks viewBox="0 3 1439 1299" preserveAspectRatio="none">
            <rect x="112.500" y="555" width="114" height="619" rx="4" fill="none" stroke="#fff" strokeWidth="5.500" />
            <rect x="762" y="333" width="68" height="831" rx="4" fill="none" stroke="#fff" strokeWidth="5.500" />
            <path d="M164 728L914 117L905 105L964 96L942 152L933 140Z" fill="#fff" />
          </Marks>
        </Left>

        <Orders>
          <StockTitle>600107 ST尔雅</StockTitle>
          <BookRow $head>
            <span>委比</span><Num $c="#ff3030">23.59%</Num>
            <DiffLabel>委差</DiffLabel><Num $c="#ff3030" $col="4 / 6">541</Num>
          </BookRow>
          {asks.map(([l, p, v]) => (
            <BookRow key={l}>
              <span>{l}</span><Num $c="#00e600">{p}</Num><Num $c="#b8b800" $col="3 / 5">{v}</Num>
            </BookRow>
          ))}
          <Hidden />
          <TickTable>
            <colgroup><col style={{ width: 129 }} /><col /><col style={{ width: 68 }} /><col style={{ width: 52 }} /><col style={{ width: 30 }} /></colgroup>
            <tbody>
              {ticks.map(([t, p, v, s, n], i) => (
                <tr key={i}><td>{t}</td><td>{p}</td><Vol $big={v > 500}>{v}</Vol><Side $s={s}>{s}</Side><td>{n}</td></tr>
              ))}
            </tbody>
          </TickTable>
          <BookTabs>
            {["笔", "价", "细", "势", "联", "值", "主", "筹"].map((t) => <BookTab key={t} $on={t === "笔"}>{t}</BookTab>)}
          </BookTabs>
        </Orders>

        <Info>
          <TradeGrid>
            <TradeButton $c="#f03030">闪电买入</TradeButton>
            <TradeButton $c="#00d000">闪电卖出</TradeButton>
            <TradeButton $c="#b8b8b8">一键全撤</TradeButton>
            <TradeButton $c="#b8b8b8">委托查询</TradeButton>
          </TradeGrid>
          <InfoTabs>
            <span>600107</span>
            {["单季", "同季", "财报", "更多.."].map((t) => <InfoTab key={t} $on={t === "单季"}>{t}</InfoTab>)}
          </InfoTabs>
          <ProfitSvg viewBox="1791 122 329 154" preserveAspectRatio="none">
            <path d="M1855.500 136V248.500H2095" fill="none" stroke="#404040" />
            <g fill="#00ff00">
              <rect x="1907" y="147" width="10" height="100" />
              <rect x="1986" y="205" width="10" height="42" />
              <rect x="2031" y="229" width="9" height="17" />
              <rect x="2043" y="218" width="9" height="28" />
              <rect x="2055" y="218" width="9" height="28" />
            </g>
            <g fill="#d0d0d0">
              <text x="1850" y="141" textAnchor="end">5.35</text>
              <text x="1850" y="169" textAnchor="end">4.02</text>
              <text x="1991" y="142">净利润(千万)</text>
              <text x="1956" y="268">2024</text>
              <text x="2033" y="268">2025</text>
            </g>
          </ProfitSvg>
          {metrics.map((rows, i) => (
            <Section key={i} $pad={metricPad[i]}>
              {rows.map(([l, v, sup]) => (
                <Metric key={v}>
                  <Dim>{l}{sup ? <sup>{sup}</sup> : null}</Dim>{v}
                </Metric>
              ))}
            </Section>
          ))}
          <Section $pad="6px 0 4px">
            <NewsLink href="#">1月31日年报预告:业绩预亏</NewsLink>
            <NewsLink href="#">2025年年报于4月30日披露</NewsLink>
            <NewsLink href="#">2026年一季报于4月30日披露</NewsLink>
          </Section>
          <Section $pad="5px 0 4px">
            <NewsLink href="#">04-03跌停:个股调整&gt;</NewsLink>
            <NewsLink href="#">04-01涨停:出售资产保壳+服装+…</NewsLink>
          </Section>
          <Section $pad="2px 0 13px">
            <Line $gap={9} $pr={5}>
              <Lead>眼光</Lead>
              {["今日", "本周", "本月", "本年"].map((t) => <InfoTab key={t} $on={t === "本周"}>{t}</InfoTab>)}
            </Line>
            <VoteRow><b>看多</b><span>0人</span><span>1人</span><b>看空</b></VoteRow>
            <Gauge>
              <GaugePart $c="#dc2444"><Thumb $c="#e88080"><ThumbsUp size={17} /></Thumb>0%</GaugePart>
              <GaugePart $grow $c="#4cb038">100%<Thumb $c="#80c070"><ThumbsDown size={17} /></Thumb></GaugePart>
            </Gauge>
          </Section>
          <Section $pad="6px 0 0">
            <Holders><Dim>QFII <sup>③</sup></Dim><span>1家</span><span>361万股</span><span>1.0%</span></Holders>
            <Holders><Dim>法人1 <sup>③</sup></Dim><span>1家</span><span>7339万股</span><span>20.4%</span></Holders>
          </Section>
          <Section $pad="5px 0">
            <Line $gap={4} $pr={4}><Lead $dim>分红</Lead>8000万(3)<Push>募资</Push>4.05亿(1)</Line>
          </Section>
          <Section $pad="4px 0 3px">
            <Line $gap={28}><Dim>日期</Dim><Dim>异动类型</Dim></Line>
            <Line $gap={16}><span>03-24</span><NewsLink href="#">ST、*ST证券连续三个交…</NewsLink></Line>
          </Section>
          <Section $pad="5px 0 0">
            <Line><Dim>公司</Dim><span>湖北美尔雅股份有限公司</span></Line>
          </Section>
        </Info>
        <Edge />
      </Columns>
      <StatsDialog />
    </Page>
  );
}
